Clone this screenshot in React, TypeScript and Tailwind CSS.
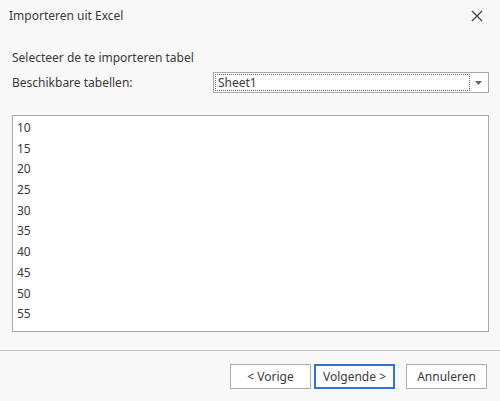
import React from "react";

const items = ["10", "15", "20", "25", "30", "35", "40", "45", "50", "55"];

export default function App() {
  return (
    <div
      className="w-[500px] h-[401px] bg-[#f8f8f8] flex flex-col text-[12px] text-[#3a3a3a] overflow-hidden"
      style={{ fontFamily: '"Noto Sans", "Open Sans", sans-serif' }}
    >
      <div className="h-[31px] flex items-center justify-between pl-[9px] pr-[17px]">
        <span className="leading-[16px]">Importeren uit Excel</span>
        <svg width="12" height="12" viewBox="0 0 12 12">
          <path d="M1 1 L11 11 M11 1 L1 11" stroke="#444" strokeWidth="1.3" fill="none" />
        </svg>
      </div>
      <div className="pl-[12px] pr-[11px] flex flex-col">
        <div className="mt-[19px] h-[16px] leading-[16px]">Selecteer de te importeren tabel</div>
        <div className="mt-[6px] h-[21px] flex items-center justify-between">
          <span className="leading-[16px]">Beschikbare tabellen:</span>
          <div className="w-[276px] h-[21px] border border-[#a8a8a8] bg-white flex items-center p-[1px]">
            <div className="flex-1 h-full border border-dotted border-[#6a6a6a] flex items-center pl-[2px] leading-[16px]">
              Sheet1
            </div>
            <div className="w-[17px] h-full flex items-center justify-center">
              <svg width="7" height="4" viewBox="0 0 7 4">
                <path d="M0 0 L7 0 L3.5 4 Z" fill="#606060" />
              </svg>
            </div>
          </div>
        </div>
        <div className="mt-[22px] h-[217px] border border-[#a9a9a9] bg-white pt-[2px] pl-[4px] flex flex-col">
          {items.map((it) => (
            <div key={it} className="h-[20.7px] leading-[20.7px] shrink-0">
              {it}
            </div>
          ))}
        </div>
      </div>
      <div className="mt-[18px] h-px bg-[#c4c4c4]" />
      <div className="mt-[13px] flex justify-end pr-[13px]">
        <button className="w-[81px] h-[25px] border border-[#adadad] bg-white leading-[16px]">&lt; Vorige</button>
        <button className="ml-[3px] w-[81px] h-[25px] border-2 border-[#2f74d0] bg-white leading-[16px]">Volgende &gt;</button>
        <button className="ml-[11px] w-[81px] h-[25px] border border-[#adadad] bg-white leading-[16px]">Annuleren</button>
      </div>
    </div>
  );
}
